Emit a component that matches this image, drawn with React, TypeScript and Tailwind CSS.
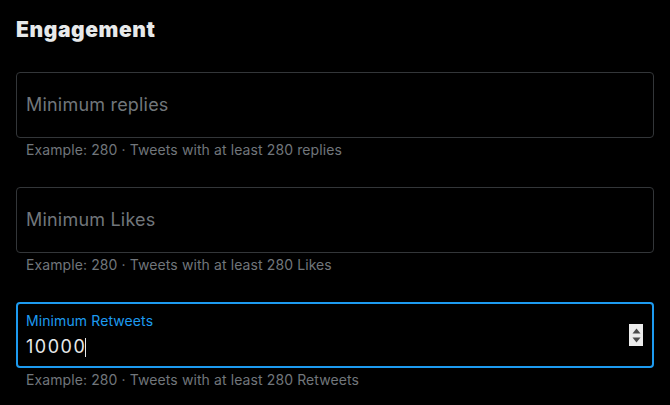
import React from "react";

const fields = [
  { placeholder: "Minimum replies", hint: "Example: 280 · Tweets with at least 280 replies" },
  { placeholder: "Minimum Likes", hint: "Example: 280 · Tweets with at least 280 Likes" },
];

function Spinner() {
  return (
    <div className="flex h-[22px] w-[14px] flex-col items-center justify-center gap-[3px] self-center bg-[#ececec]">
      <svg width="9" height="6" viewBox="0 0 9 6">
        <path d="M4.5 0.5L8.5 5.5H0.5Z" fill="#4a4a4a" />
      </svg>
      <svg width="9" height="6" viewBox="0 0 9 6">
        <path d="M0.5 0.5H8.5L4.5 5.5Z" fill="#4a4a4a" />
      </svg>
    </div>
  );
}

export default function App() {
  return (
    <div
      className="h-[405px] w-[670px] bg-black px-4 pt-[18px]"
      style={{ fontFamily: "Inter, 'Noto Sans', sans-serif" }}
    >
      <h2 className="text-[21px] font-black leading-6 tracking-[0.6px] text-[#e7e9ea]">Engagement</h2>

      <div className="mt-[30px] flex flex-col">
        {fields.map((f) => (
          <div key={f.placeholder} className="mb-[29px]">
            <div className="flex h-[66px] items-center rounded-[4px] border border-[#333639] px-[9px]">
              <span className="text-[18px] leading-5 tracking-[0.2px] text-[#71767b]">{f.placeholder}</span>
            </div>
            <p className="mt-1 px-[10px] text-[14px] leading-4 tracking-[0.1px] text-[#71767b]">{f.hint}</p>
          </div>
        ))}

        <div>
          <div className="flex h-[66px] rounded-[4px] border-2 border-[#1d9bf0] pl-[8px] pr-[9px] pt-[9px]">
            <div className="flex flex-1 flex-col">
              <span className="text-[14px] leading-4 tracking-[0.1px] text-[#1d9bf0]">Minimum Retweets</span>
              <div className="mt-2 flex items-center">
                <span className="text-[18px] leading-5 tracking-[1.5px] text-[#e7e9ea]">10000</span>
                <span className="ml-[-1px] h-[19px] w-px bg-[#e7e9ea]" />
              </div>
            </div>
            <div className="flex items-center pb-[9px]">
              <Spinner />
            </div>
          </div>
          <p className="mt-1 px-[10px] text-[14px] leading-4 tracking-[0.1px] text-[#71767b]">
            Example: 280 · Tweets with at least 280 Retweets
          </p>
        </div>
      </div>
    </div>
  );
}
